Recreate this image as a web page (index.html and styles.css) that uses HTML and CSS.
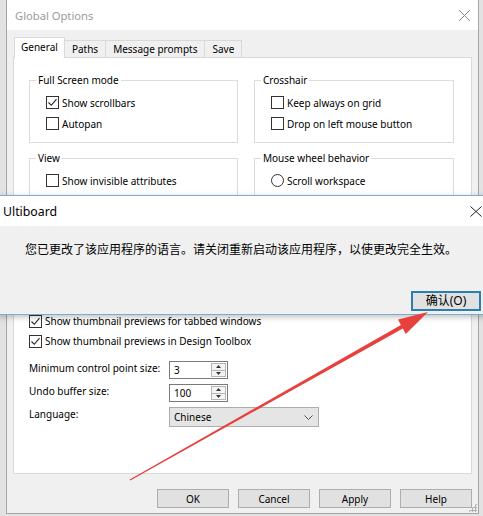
FILE: index.html
```html
<!DOCTYPE html>
<html lang="en">
<head>
    <meta charset="UTF-8">
    <meta name="viewport" content="width=device-width, initial-scale=1.0">
    <title>Global Options</title>
    <link rel="stylesheet" href="styles.css">
</head>
<body>
    <div class="desktop">
        <div class="window">
            <div class="titlebar">
                <span class="title">Global Options</span>
                <svg class="close-x" width="13" height="13" viewBox="0 0 13 13"><path d="M1 1L12 12M12 1L1 12"/></svg>
            </div>

            <div class="window-body">
                <div class="tabs">
                    <div class="tab active">General</div>
                    <div class="tab">Paths</div>
                    <div class="tab">Message prompts</div>
                    <div class="tab">Save</div>
                </div>

                <div class="panel">
                    <div class="groups">
                        <fieldset class="group">
                            <legend>Full Screen mode</legend>
                            <div class="check"><span class="box checked"><svg viewBox="0 0 11 11"><path d="M1.5 5.5L4.3 8.3L9.5 2.2"/></svg></span>Show scrollbars</div>
                            <div class="check"><span class="box"></span>Autopan</div>
                        </fieldset>
                        <fieldset class="group">
                            <legend>Crosshair</legend>
                            <div class="check"><span class="box"></span>Keep always on grid</div>
                            <div class="check"><span class="box"></span>Drop on left mouse button</div>
                        </fieldset>
                        <fieldset class="group">
                            <legend>View</legend>
                            <div class="check"><span class="box"></span>Show invisible attributes</div>
                        </fieldset>
                        <fieldset class="group">
                            <legend>Mouse wheel behavior</legend>
                            <div class="check"><span class="radio"></span>Scroll workspace</div>
                            <div class="check"><span class="radio"></span>Zoom workspace</div>
                        </fieldset>
                    </div>

                    <div class="options">
                        <div class="check"><span class="box checked"><svg viewBox="0 0 11 11"><path d="M1.5 5.5L4.3 8.3L9.5 2.2"/></svg></span>Show thumbnail previews for tabbed windows</div>
                        <div class="check"><span class="box checked"><svg viewBox="0 0 11 11"><path d="M1.5 5.5L4.3 8.3L9.5 2.2"/></svg></span>Show thumbnail previews in Design Toolbox</div>
                    </div>

                    <div class="fields">
                        <div class="field-label">Minimum control point size:</div>
                        <div class="spin">
                            <span class="spin-value">3</span>
                            <span class="spin-buttons">
                                <span class="spin-btn"><svg width="5" height="3" viewBox="0 0 5 3"><path d="M0 3L2.5 0L5 3Z"/></svg></span>
                                <span class="spin-btn"><svg width="5" height="3" viewBox="0 0 5 3"><path d="M0 0L2.5 3L5 0Z"/></svg></span>
                            </span>
                        </div>
                        <div class="field-label">Undo buffer size:</div>
                        <div class="spin">
                            <span class="spin-value">100</span>
                            <span class="spin-buttons">
                                <span class="spin-btn"><svg width="5" height="3" viewBox="0 0 5 3"><path d="M0 3L2.5 0L5 3Z"/></svg></span>
                                <span class="spin-btn"><svg width="5" height="3" viewBox="0 0 5 3"><path d="M0 0L2.5 3L5 0Z"/></svg></span>
                            </span>
                        </div>
                        <div class="field-label">Language:</div>
                        <div class="combo">
                            <span>Chinese</span>
                            <svg width="9" height="5" viewBox="0 0 9 5"><path d="M0.5 0.5L4.5 4.5L8.5 0.5"/></svg>
                        </div>
                    </div>
                </div>

                <div class="buttons">
                    <button class="btn">OK</button>
                    <button class="btn">Cancel</button>
                    <button class="btn">Apply</button>
                    <button class="btn">Help</button>
                </div>
            </div>
            <div class="grip"></div>
        </div>

        <!-- message box on top of the options dialog -->
        <div class="msgbox">
            <div class="msg-title">
                <span>Ultiboard</span>
                <svg class="msg-close" width="12" height="11" viewBox="0 0 12 11"><path d="M0.5 0.5L11.5 10.5M11.5 0.5L0.5 10.5"/></svg>
            </div>
            <div class="msg-body">
                <p class="msg-text">您已更改了该应用程序的语言。请关闭重新启动该应用程序，以使更改完全生效。</p>
                <div class="msg-actions">
                    <button class="msg-btn">确认(O)</button>
                </div>
            </div>
        </div>

        <svg class="arrow" width="483" height="516" viewBox="0 0 483 516">
            <polygon points="130.3,480.5 402.9,328.4 405.8,333.9 428,312 398,319.6 400.9,325 129.7,479.5"/>
        </svg>
    </div>
</body>
</html>
```

FILE: styles.css
```css
* {
    box-sizing: border-box;
}

body {
    margin: 0;
    overflow: hidden;
    background: #e2e2e2;
    font-family: "Noto Sans", sans-serif;
    font-size: 10px;
    color: #000;
}

.desktop {
    position: relative;
    width: 483px;
    height: 516px;
}

.window {
    position: relative;
    width: 473px;
    height: 514px;
    margin-left: 6px;
    background: #f0f0f0;
    border: 1px solid #a5a5a5;
    border-top: none;
}

.titlebar {
    height: 30px;
    background: #fff;
    display: flex;
    align-items: center;
    justify-content: space-between;
    padding: 0 7px 0 8px;
}

.title {
    font-size: 11.2px;
    color: #9b9b9b;
}

.close-x path {
    stroke: #8a8a8a;
    stroke-width: 1;
    fill: none;
}

.tabs {
    display: flex;
    align-items: flex-end;
    height: 27px;
    padding-left: 7px;
}

.tab {
    height: 17px;
    line-height: 16px;
    padding: 0 7px;
    background: #f0f0f0;
    border: 1px solid #d9d9d9;
    border-bottom: none;
    margin-left: -1px;
}

.tab:first-child {
    margin-left: 0;
}

.tab.active {
    position: relative;
    z-index: 1;
    height: 21px;
    line-height: 18px;
    padding: 0 6px;
    margin-bottom: -1px;
    background: #fff;
}

.panel {
    height: 417px;
    margin: 0 6px;
    background: #fff;
    border: 1px solid #d9d9d9;
    padding: 14px 17px 0 15px;
}

.groups {
    display: grid;
    grid-template-columns: 209px 200px;
    column-gap: 16px;
    row-gap: 7px;
}

.group {
    margin: 0;
    min-width: 0;
    border: 1px solid #dcdcdc;
    padding: 4px 8px 8px 6px;
}

.group legend {
    padding: 0 2px;
    line-height: 16px;
}

.group .check {
    margin-left: 10px;
}

.check {
    display: flex;
    align-items: center;
    gap: 3px;
    height: 21px;
}

.box, .radio {
    width: 13px;
    height: 13px;
    border: 1px solid #333;
    background: #fff;
    flex-shrink: 0;
    display: flex;
    align-items: center;
    justify-content: center;
}

.radio {
    border-radius: 50%;
}

.box svg {
    width: 11px;
    height: 11px;
}

.box svg path {
    fill: none;
    stroke: #222;
    stroke-width: 1.1;
}

.options {
    margin-top: 90px;
}

.options .check {
    height: 20px;
}

.fields {
    display: grid;
    grid-template-columns: 140px auto;
    row-gap: 5px;
    margin-top: 10px;
    align-items: start;
}

.field-label {
    line-height: 14px;
}

.spin {
    display: flex;
    width: 59px;
    height: 18px;
    border: 1px solid #7a7a7a;
    background: #fff;
}

.spin-value {
    flex: 1;
    padding-left: 4px;
    line-height: 17px;
}

.spin-buttons {
    display: flex;
    flex-direction: column;
    width: 15px;
    margin: 1px 1px 1px 0;
}

.spin-btn {
    flex: 1;
    display: flex;
    align-items: center;
    justify-content: center;
    background: #f4f4f4;
    border: 1px solid #b5b5b5;
}

.spin-btn + .spin-btn {
    border-top: none;
}

.spin-btn path {
    fill: #333;
}

.combo {
    display: flex;
    align-items: center;
    justify-content: space-between;
    width: 150px;
    height: 20px;
    padding: 0 5px 0 4px;
    background: #e5e5e5;
    border: 1px solid #adadad;
}

.combo path {
    fill: none;
    stroke: #555;
    stroke-width: 1;
}

.buttons {
    display: flex;
    justify-content: flex-end;
    gap: 9px;
    margin-top: 15px;
    padding-right: 6px;
}

.btn {
    width: 72px;
    height: 19px;
    padding: 0;
    font-family: "Noto Sans", sans-serif;
    font-size: 10px;
    color: #000;
    background: #e1e1e1;
    border: 1px solid #adadad;
}

.grip {
    position: absolute;
    right: 1px;
    bottom: 1px;
    width: 9px;
    height: 9px;
    background: radial-gradient(circle, #b0b0b0 1px, transparent 1.2px) 0 0 / 3px 3px;
    clip-path: polygon(100% 0, 100% 100%, 0 100%);
}

.msgbox {
    position: absolute;
    top: 195px;
    left: -2px;
    width: 494px;
    background: #f0f0f0;
    border: 1px solid #78aed0;
    box-shadow: 0 2px 6px rgba(0, 0, 0, 0.25);
}

.msg-title {
    height: 30px;
    background: #fff;
    display: flex;
    align-items: center;
    justify-content: space-between;
    padding: 0 9px 0 4px;
    font-size: 12.3px;
}

.msg-close path {
    fill: none;
    stroke: #222;
    stroke-width: 1;
}

.msg-body {
    padding: 16px 10px 3px 26px;
}

.msg-text {
    margin: 0;
    font-family: "Noto Sans", "Noto Sans CJK SC", sans-serif;
    font-size: 12px;
    line-height: 16px;
}

.msg-actions {
    display: flex;
    justify-content: flex-end;
    margin-top: 33px;
}

.msg-btn {
    width: 70px;
    height: 20px;
    padding: 0;
    font-family: "Noto Sans", "Noto Sans CJK SC", sans-serif;
    font-size: 12px;
    line-height: 14px;
    color: #000;
    background: #e1e1e1;
    border: 2px solid #2c7db0;
}

.arrow {
    position: absolute;
    top: 0;
    left: 0;
    pointer-events: none;
}

.arrow polygon {
    fill: #e8403d;
}
```
